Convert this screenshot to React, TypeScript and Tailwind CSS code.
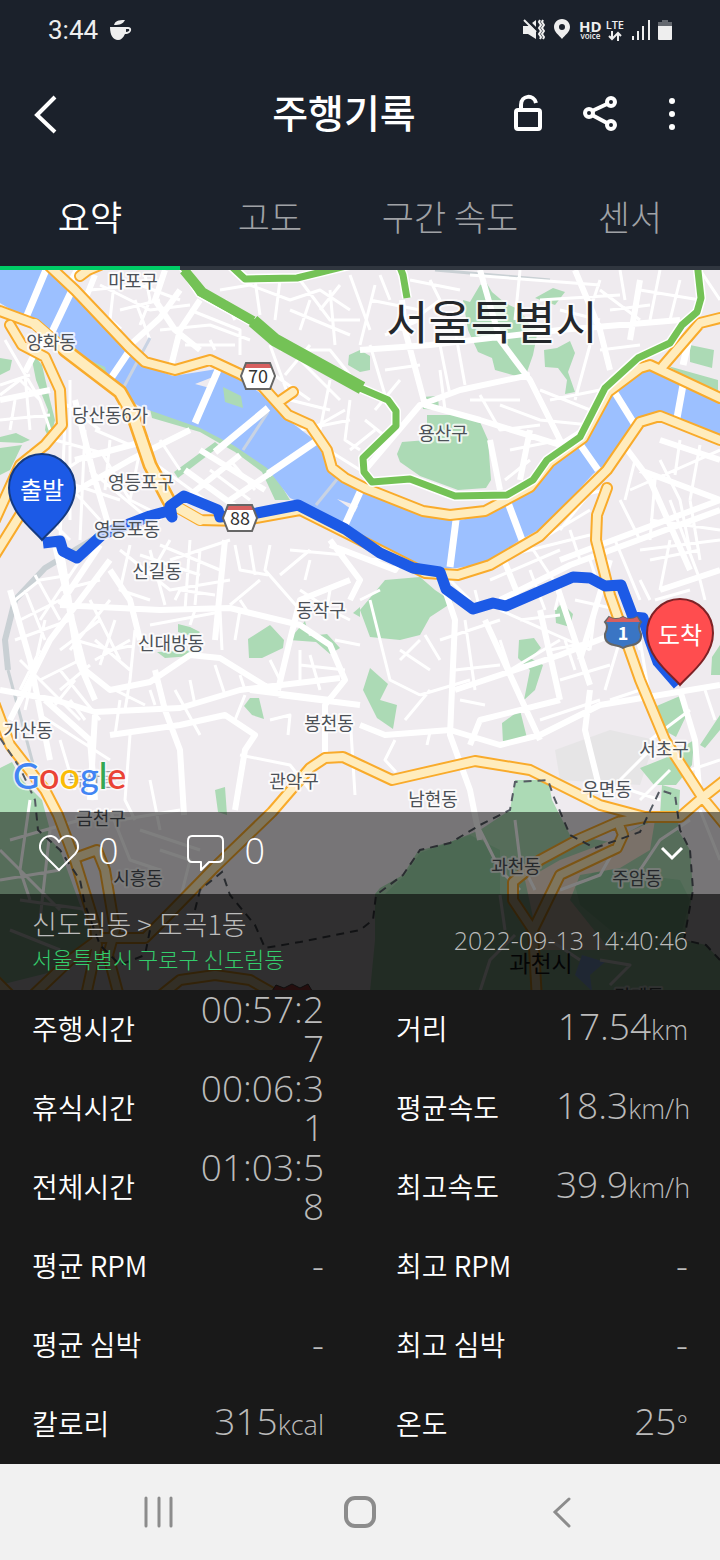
import { useState } from "react";

const KR = "font-['Noto_Sans_CJK_KR',sans-serif]";

const TABS = ["요약", "고도", "구간 속도", "센서"];

type Stat = { label: string; value: string; unit?: string; wrap?: boolean };

const STATS: Stat[] = [
  { label: "주행시간", value: "00:57:27", wrap: true },
  { label: "거리", value: "17.54", unit: "km" },
  { label: "휴식시간", value: "00:06:31", wrap: true },
  { label: "평균속도", value: "18.3", unit: "km/h" },
  { label: "전체시간", value: "01:03:58", wrap: true },
  { label: "최고속도", value: "39.9", unit: "km/h" },
  { label: "평균 RPM", value: "-" },
  { label: "최고 RPM", value: "-" },
  { label: "평균 심박", value: "-" },
  { label: "최고 심박", value: "-" },
  { label: "칼로리", value: "315", unit: "kcal" },
  { label: "온도", value: "25", unit: "°" },
];

const PLACES = [
  { name: "마포구", x: 133, y: 288 },
  { name: "양화동", x: 51, y: 349 },
  { name: "당산동6가", x: 110, y: 422 },
  { name: "영등포구", x: 141, y: 489 },
  { name: "영등포동", x: 127, y: 536 },
  { name: "신길동", x: 157, y: 578 },
  { name: "동작구", x: 321, y: 617 },
  { name: "신대방동", x: 171, y: 650 },
  { name: "봉천동", x: 329, y: 730 },
  { name: "가산동", x: 28, y: 737 },
  { name: "관악구", x: 294, y: 788 },
  { name: "남현동", x: 433, y: 806 },
  { name: "우면동", x: 607, y: 796 },
  { name: "서초구", x: 664, y: 756 },
  { name: "용산구", x: 443, y: 440 },
  { name: "금천구", x: 101, y: 825 },
  { name: "시흥동", x: 138, y: 885 },
  { name: "과천동", x: 516, y: 873 },
  { name: "주암동", x: 637, y: 885 },
  { name: "막계동", x: 639, y: 1003 },
];

const RIVER =
  "M0 260 L45 265 75 296 110 330 143 365 173 376 217 369 243 381 267 398 287 419 317 442 333 475 360 492 423 515 457 521 490 513 533 487 547 464 580 440 607 394 630 373 650 369 720 400 V442 L660 420 643 424 627 447 593 474 547 525 517 542 487 563 457 568 427 569 393 555 360 534 320 512 290 498 267 468 233 445 200 428 143 408 100 385 60 350 25 318 0 303Z";

const PARKS = [
  "M427 415 470 415 480 422 488 440 491 480 486 488 458 490 420 476 400 462 397 454 402 442 427 440Z",
  "M421 397 438 396 439 410 423 409Z",
  "M463 300 470 302 480 285 486 282 492 292 505 303 520 310 530 325 538 330 533 355 527 372 520 377 495 370 492 358 478 352 468 330Z",
  "M535 298 553 288 565 292 555 305Z",
  "M544 350 557 348 570 341 575 353 568 372 575 392 565 394 567 380 558 368 545 367Z",
  "M0 358 12 360 10 370 0 375Z M0 437 16 433 30 440 22 443 0 442Z M0 448 22 445 10 470 0 475Z",
  "M349 355 360 350 370 356 370 370 360 372 348 365Z",
  "M690 345 714 350 712 368 690 362Z M668 366 718 380 718 391 690 380Z",
  "M215 375 220 387 210 385Z",
  "M150 409 205 420 240 440 270 467 290 500 275 500 262 472 235 452 200 432 152 418Z",
  "M174 472 215 442 220 446 178 478Z",
  "M30 350 42 365 50 400 55 420 50 440 45 430 48 410 36 380Z",
  "M360 610 385 580 420 577 435 590 453 602 430 617 420 635 400 640 370 637Z",
  "M248 639 270 625 272 627 284 640 283 648 262 658 249 658Z M289 640 305 621 309 636 327 634 340 648 330 654 316 642Z",
  "M178 624 190 627 200 632 195 637 178 632Z M157 652 200 650 192 656 165 658Z",
  "M244 706 250 698 259 698 264 719 252 715Z M353 613 360 607 360 617Z",
  "M555 610 562 603 573 614 570 627 556 623Z M519 640 534 638 541 648 530 658 543 665 535 690 524 700 530 670 518 658Z",
  "M502 723 520 710 527 738 503 743Z M363 690 370 668 388 684 380 700 397 705 393 729 377 718Z",
  "M652 708 680 696 688 712 676 737 660 728Z M712 657 720 645 720 675 711 675Z M700 745 720 715 720 730 705 748Z",
  "M640 768 665 758 694 740 692 765 676 785 654 785Z",
  "M215 790 225 787 227 815 218 812Z M0 768 12 762 22 780 42 800 50 830 40 850 0 820Z",
  "M0 820 25 812 60 850 80 905 95 940 60 970 0 985Z",
  "M515 780 548 780 552 800 570 835 610 842 660 815 662 785 680 790 678 830 690 850 693 890 684 940 706 945 720 960 720 991 370 991 375 940 375 894 380 888 403 875 418 851 450 842 480 830 510 810Z",
];

const FOREST_DARK =
  "M420 853 470 835 500 850 500 894 385 894 405 875Z M575 885 600 868 640 875 680 880 690 900 680 940 610 930 580 905Z";

// main white streets
const STREETS = [
  "M77 270 60 300 52 320 25 372 M70 300 55 330 M165 270 155 300 175 330 200 350",
  "M95 275 85 300 120 330 M180 290 160 318 130 345 M200 300 180 330 170 370",
  "M60 545 72 620 85 670 110 690 150 682 190 655 220 658 280 695 360 705",
  "M0 690 55 700 95 712 180 708 240 690 340 678",
  "M155 670 165 710 180 750 184 815 M95 715 90 800 M110 735 180 725 225 715 255 735 245 750 235 810",
  "M225 540 215 640 M60 605 160 610 230 608 300 625 330 645 345 680 325 705 325 755",
  "M350 580 300 600 290 640 278 690 M445 590 455 620 450 735 470 790 480 840",
  "M360 725 385 735 450 730 500 745 540 735 600 705 720 685",
  "M455 690 560 655 650 620 M470 745 480 720 560 700 M485 620 540 740 M540 610 560 700",
  "M660 590 720 570 M500 600 570 565 720 510 M590 690 585 730 600 790",
  "M680 690 695 740 700 800 M610 560 580 660 M555 580 590 685 M500 550 520 600",
  "M402 300 405 330 425 405 480 420 560 445 600 420 M480 270 500 340 530 380 560 440 570 460",
  "M360 350 430 345 560 330 680 320 M575 270 600 330 610 370 M640 280 630 340",
  "M365 470 420 405 460 390 530 375 M490 440 500 490 M530 430 520 480",
  "M620 440 650 480 690 570 M640 470 720 500 M660 440 720 460 M560 560 720 500",
  "M0 400 50 390 M75 400 95 480 110 530 M75 460 150 440 M60 500 130 460 190 430",
  "M110 560 50 640 10 720 M10 590 30 660 50 760 M110 570 130 600 140 640",
  "M185 470 240 510 M200 450 265 490 M230 500 275 470 M190 495 240 455",
  "M330 540 360 580 350 600 M410 545 395 570 330 545",
  "M55 545 68 600 78 660 95 700 M250 690 330 700 M100 545 60 605 M45 700 90 740 95 800",
];

const LANES = [
  "M100 285 150 310 190 305 M115 275 110 320 M135 300 150 340 M190 310 240 330 240 355",
  "M220 290 250 285 290 300 320 290 350 310 M280 280 275 320 M300 280 330 320 360 320",
  "M310 300 300 330 M340 285 320 310 M370 300 420 310 M430 280 440 300 400 330 M380 275 390 300",
  "M270 345 290 400 330 410 M300 360 340 400 M330 380 320 430 M350 400 345 440 360 450",
  "M210 340 215 350 M185 345 235 345 M300 430 350 420 M320 445 360 470",
  "M375 410 400 380 M365 420 390 440 M440 370 445 410 M470 400 520 400 M540 390 590 410",
  "M500 405 540 420 590 425 M510 450 560 440 M530 460 505 480 M480 395 500 430 540 425",
  "M540 300 620 295 M600 280 590 310 M640 290 700 300 M660 270 650 320 M610 310 650 305 M700 270 720 300",
  "M470 275 600 285 M520 270 515 320 M560 310 600 320",
  "M5 340 40 400 M0 395 20 380 40 400 50 430 M20 470 50 480 80 460 M70 380 70 520 M85 430 80 540",
  "M90 470 150 520 M100 450 130 500 M60 480 120 500 M40 510 70 540 M110 440 105 490",
  "M160 440 180 470 M150 460 205 500 M170 480 160 520 M210 470 250 500 M230 460 255 490",
  "M120 550 170 590 230 580 M130 545 120 590 150 600 M150 550 165 605 M190 540 185 610 M235 545 240 570 268 575",
  "M170 560 230 540 M175 600 180 590 215 595 M150 625 220 612 M135 630 130 680 M220 610 222 650",
  "M20 620 60 600 M15 640 70 620 M60 650 100 620 M40 680 80 660 M20 660 50 690 80 720",
  "M60 670 100 720 M40 715 110 760 M80 560 40 620 M90 600 120 660 M95 640 130 670 M60 690 90 665",
  "M150 690 155 705 M175 690 200 735 M120 700 115 735 M130 735 125 800 135 820 M60 740 75 790",
  "M270 545 265 570 300 610 M290 550 345 555 M310 560 305 580 M330 590 325 620 M240 600 250 615 M260 580 230 605",
  "M300 650 300 680 M270 660 280 680 M310 655 320 690 M335 640 360 645 M240 755 290 765 310 790",
  "M350 715 355 795 M270 720 290 715 288 735 M245 695 235 720 M150 780 160 830",
  "M370 560 420 555 M380 590 360 600 M430 560 470 600 M370 600 390 680 420 695 M420 695 470 680",
  "M400 650 430 670 M405 720 430 690 M400 660 420 640 M425 635 440 660 M440 640 500 620",
  "M460 700 485 705 M455 670 500 665 M465 620 475 690 M500 640 510 670 560 640 M520 620 560 615",
  "M500 610 590 650 M540 720 600 700 M550 650 600 640 M560 680 610 665 M590 560 600 590 M530 570 545 610",
  "M630 490 720 450 M650 520 720 530 M640 550 720 540 M620 500 640 540 M660 460 680 500 690 550",
  "M540 540 590 510 M570 530 580 560 M540 560 560 590 M650 560 700 550 M640 580 650 600 M630 620 640 650",
  "M690 500 700 560 M640 640 650 700 M610 700 640 690 M560 590 555 610 M700 420 720 430",
  "M620 430 610 470 M600 480 560 530 M670 500 700 580 M705 690 715 720 M650 740 690 710 M620 780 650 750 M690 770 720 760",
  "M640 800 670 770 M630 790 660 800 M395 740 385 760 396 772 M430 732 427 745",
  "M10 840 80 820 M30 800 20 870 30 900 M0 880 60 870 M50 830 40 920 M20 900 90 910 M0 850 60 910 M10 930 60 950",
  "M110 810 130 860 160 870 M140 830 200 850 M120 820 180 810 M160 850 190 860 180 900",
  "M480 830 500 870 520 890 M515 820 520 860 535 890 M500 895 505 930 M480 991 490 960 515 935",
  "M640 870 660 840 690 820 M560 890 600 875 620 840 M700 810 720 860 M550 940 580 960 M600 960 630 965 610 985",
  "M90 290 140 285 180 300 M145 275 150 300 140 325 M160 330 210 325 250 340 M120 310 160 300",
  "M225 300 235 320 M255 280 260 315 M290 310 350 335 M330 290 335 345 M350 275 370 330 M375 285 360 345",
  "M280 350 330 350 350 375 M310 345 285 375 M260 365 310 400 M345 410 310 430 M375 430 350 450",
  "M410 280 460 290 M420 320 385 335 M370 345 385 395 M440 345 450 395 M455 330 465 385 M385 370 420 365",
  "M590 345 575 400 M600 350 640 345 M550 400 600 390 M600 290 640 320 M620 270 625 300 M680 280 670 320",
  "M60 400 100 430 M55 440 110 455 M50 465 100 520 M65 420 60 540 M95 430 130 445 M140 450 130 500 150 510",
  "M15 400 10 430 M0 420 50 415 M25 375 30 430 M0 385 30 375 M30 450 5 500 M70 500 50 530",
  "M15 600 40 580 70 575 M25 590 45 640 M35 575 60 620 M110 600 70 650 M100 580 60 590 M75 640 110 650 135 645",
  "M95 660 130 640 M115 620 100 665 M20 690 40 650 M45 620 25 710 M55 705 75 680 M70 700 85 720",
  "M140 555 200 575 M160 545 220 570 M200 550 195 605 M170 540 150 575 M240 610 235 640 M195 610 190 625",
  "M115 690 145 705 M130 680 125 710 M190 680 195 705 M215 665 225 695 M240 675 245 690",
  "M250 545 255 575 M280 575 310 550 M300 590 330 610 350 620 M300 665 345 670",
  "M620 640 605 690 M575 600 620 610 M565 640 575 670 M595 610 590 650 M655 600 690 590 M700 580 705 600",
  "M635 460 625 500 M680 440 675 475 M700 445 690 500 M655 480 650 540 M615 540 640 600 M670 540 660 590",
  "M490 580 560 550 M475 590 480 610 M510 555 590 535 M530 545 550 575 M605 490 560 500",
];

const BRIDGES =
  "M48 265 25 320 M72 290 52 332 M128 353 105 387 M218 370 195 423 M268 408 215 452 M315 442 268 474 M360 492 345 525 M456 520 450 567 M507 500 522 540 M577 440 598 470 M612 388 635 425 M683 385 677 418 M690 335 683 365";

const HIGHWAYS = [
  "M45 262 75 290 130 348 145 362 175 370 210 360 240 374 262 386 288 415 310 425 327 450 332 468 345 478 365 488 423 511 450 515 485 511 530 487 550 462 583 438 608 392 640 368 650 365 720 398",
  "M0 311 35 324 65 350 120 392 133 415 150 465 170 503 200 520 240 521 300 510 360 540 425 573 458 575 490 565 540 536 607 470 640 422 660 416 720 440",
  "M663 366 700 323 720 318",
  "M607 488 597 515 596 540 610 595 640 680 665 740 702 797 725 825",
  "M10 325 22 345 45 357 60 390 62 425 45 445 20 465 -5 520",
  "M-5 555 20 515",
  "M272 812 310 768 325 758 343 757 360 765 392 780 475 761 530 770 600 805 645 817 680 817 702 798 725 780",
  "M272 812 215 867 165 918 145 938 100 938 70 960 28 1000",
  "M-5 705 10 745 45 790 58 815 75 860 95 925 97 945 85 1000",
  "M120 1000 108 955 115 930 105 870 97 850 75 858",
  "M155 1000 180 980 215 975 250 980 285 1000 M-5 980 15 1000",
  "M645 817 618 822 577 840 540 860 513 882 513 900 533 930",
  "M618 822 623 835 617 848 560 875 533 930 537 1000",
  "M80 276 88 270 100 265 M280 401 293 392",
];

const BORDERS =
  "M0 738 20 768 35 800 38 830 60 850 80 880 85 905 100 945 120 965 145 955 150 930 M195 910 200 890 222 872 230 895 255 925 265 948 300 942 360 930 373 920 376 895 403 875 420 850 450 843 480 825 510 810 515 782 548 780 553 795 570 835 595 848 640 832 660 790 675 795 680 830 690 850 693 890 684 940 706 945 720 960";

const GREEN_LINE =
  "M180 262 200 293 253 322 273 340 360 388 388 400 396 411 396 426 363 458 364 472 372 482 410 479 455 496 507 495 533 480 547 460 580 437 605 388 638 358 670 343 682 325 697 312 701 298 697 262 M230 265 245 279 297 278 350 265 M398 262 403 275 407 298";

const ROUTE =
  "M43 543 60 541 63 551 77 558 103 534 150 516 168 511 172 517 170 506 184 496 218 510 220 517 257 513 298 505 345 529 380 553 413 568 440 572 446 589 473 609 493 603 506 606 573 577 590 578 605 586 621 585 633 617 643 618 650 640 658 662 678 685";

function RoadShield({ x, y, label }: { x: number; y: number; label: string }) {
  return (
    <g transform={`translate(${x} ${y})`}>
      <path d="M-12 -13H12L17 0 12 13H-12L-17 0Z" fill="#fff" />
      <path d="M-12 -13H12L14 -8H-14Z" fill="#d75f5f" />
      <path d="M-12 -13H12L17 0 12 13H-12L-17 0Z" fill="none" stroke="#666" strokeWidth="2" />
      <text y="7" textAnchor="middle" className={`${KR} text-[18px]`} fill="#333">
        {label}
      </text>
    </g>
  );
}

function Pin({ x, y, label, fill, stroke }: { x: number; y: number; label: string; fill: string; stroke: string }) {
  return (
    <g transform={`translate(${x} ${y})`}>
      <path
        d="M0 0C-7 -9 -33 -27 -33 -52A33 34 0 0 1 33 -52C33 -27 7 -9 0 0Z"
        fill={fill}
        stroke={stroke}
        strokeWidth="2"
      />
      <text y="-41" textAnchor="middle" className={`${KR} text-[24px]`} fill="#fff">
        {label}
      </text>
    </g>
  );
}

function RouteMap() {
  return (
    <svg
      viewBox="0 270 720 720"
      preserveAspectRatio="xMidYMin slice"
      className="absolute inset-0 h-full w-full"
      role="img"
      aria-label="주행 경로 지도"
    >
      <rect x="0" y="260" width="720" height="740" fill="#efebef" />
      <path d="M555 750 610 730 655 740 640 785 560 780Z" fill="#e6e5e6" />
      <path d={PARKS.join(" ")} fill="#acdab5" />
      <path d={FOREST_DARK} fill="#98d2a6" />
      <path d="M560 860 600 845 655 820 650 850 620 868 580 875 570 900 610 950 540 950 525 880Z" fill="#f4e3d2" />
      <path d="M582 955 605 962 590 975 592 991 575 975Z" fill="#9cc0ff" />

      <g fill="none" stroke="#c9d0d4" strokeWidth="3">
        <path d="M100 535 45 568 15 600 5 640 8 670" strokeWidth="6" />
        <path d="M8 670 40 790 M712 400 708 430 M435 270 550 280" />
      </g>

      <g fill="none" stroke="#fff" strokeLinejoin="round">
        <path d={LANES.join(" ")} strokeWidth="3" />
        <path d={STREETS.join(" ")} strokeWidth="6" />
      </g>

      <path d={RIVER} fill="#9cc0ff" />
      <path d="M82 357 105 367 107 374 85 364Z M223 387 241 396 243 408 225 402Z" fill="#acdab5" />
      <path d="M195 384 213 377 210 388Z M337 499 358 506 355 512Z" fill="#efebef" />
      <path d="M150 338 120 394 M268 412 243 450 M338 478 316 505" fill="none" stroke="#c9d3e3" strokeWidth="3" />
      <path d={BRIDGES} fill="none" stroke="#fff" strokeWidth="7" />

      <g fill="none" strokeLinejoin="round" strokeLinecap="round">
        <path d={HIGHWAYS.join(" ")} stroke="#f9ab2b" strokeWidth="12" />
        <path d={HIGHWAYS.join(" ")} stroke="#ffecbd" strokeWidth="8" />
        <path d="M65 350 120 392 133 415 150 465 170 503" stroke="#f9ab2b" strokeWidth="15" />
        <path d="M35 324 65 350 120 392 133 415 150 465 170 503 200 520" stroke="#ffecbd" strokeWidth="10" />
      </g>

      <path d={BORDERS} fill="none" stroke="#555b63" strokeWidth="2" strokeDasharray="8 6" />

      <g fill="none" strokeLinejoin="round">
        <path d={GREEN_LINE} stroke="#fff" strokeWidth="10" />
        <path d={GREEN_LINE} stroke="#74c256" strokeWidth="7" />
        <path d="M184 270 202 292 253 321" stroke="#74c256" strokeWidth="10" />
        <path d="M253 321 275 340 362 388" stroke="#74c256" strokeWidth="13" />
        <path d={ROUTE} stroke="#1c5ae6" strokeWidth="11" />
      </g>

      <RoadShield x={258} y={376} label="70" />
      <RoadShield x={240} y={518} label="88" />

      <g stroke="#666" strokeWidth="2">
        <path d="M609 617Q616 621 623 617Q630 621 637 617L641 622Q637 626 641 634Q642 643 632 645Q626 646 623 648Q620 646 614 645Q604 643 605 634Q609 626 605 622Z" fill="#3a75c4" />
        <path d="M609 617Q616 621 623 617Q630 621 637 617L640 622H606Z" fill="#d75f5f" stroke="none" />
      </g>
      <text x="623" y="640" textAnchor="middle" className={`${KR} text-[18px] font-bold`} fill="#fff">
        1
      </text>
      <path d="M270 994 276 985 284 988 292 984 300 988 308 984 314 994Z" fill="#b94848" stroke="#444" />

      <g
        textAnchor="middle"
        fill="#4c5157"
        stroke="#fff"
        strokeOpacity="0.8"
        strokeWidth="4"
        strokeLinejoin="round"
        style={{ paintOrder: "stroke" }}
        className={`${KR} text-[18px]`}
      >
        {PLACES.map((p) => (
          <text key={p.name} x={p.x} y={p.y}>
            {p.name}
          </text>
        ))}
        <text x="92" y="786" opacity="0.5">
          독산동
        </text>
        <text x="492" y="339" fill="#24272b" className="text-[46px]">
          서울특별시
        </text>
        <text x="541" y="972" fill="#16181b" strokeOpacity="0" className="text-[23px]">
          과천시
        </text>
      </g>

      <Pin x={42} y={540} label="출발" fill="#1c5ae6" stroke="#153a80" />
      <Pin x={680} y={685} label="도착" fill="#ff4d4f" stroke="#7d2226" />

      <text
        x="13"
        y="789"
        stroke="#fff"
        strokeOpacity="0.7"
        strokeWidth="3"
        style={{ paintOrder: "stroke" }}
        className="font-[Lato,sans-serif] text-[36px] font-medium"
      >
        <tspan fill="#4285f4">G</tspan>
        <tspan fill="#ea4335">o</tspan>
        <tspan fill="#fbbc05">o</tspan>
        <tspan fill="#4285f4">g</tspan>
        <tspan fill="#34a853">l</tspan>
        <tspan fill="#ea4335">e</tspan>
      </text>
    </svg>
  );
}

function StatusBar() {
  return (
    <div className="flex h-15 items-center justify-between px-12 text-[#eee]">
      <div className="flex items-center gap-3">
        <span className="font-[Roboto,sans-serif] text-[26px] leading-8">3:44</span>
        <svg width="22" height="22" viewBox="0 0 22 22" fill="currentColor">
          <path
            fillRule="evenodd"
            d="M0 8H18C23 8 22 15 15 15C13 19 11 21 8 21C3 21 0 16 0 8ZM16 10V13C20 13 20 10 18 10Z"
          />
          <path d="M4 6C5 2 8 1 15 1C13 5 10 6 4 6Z" />
        </svg>
      </div>
      <div className="flex items-center gap-2">
        <svg width="22" height="22" viewBox="0 0 22 22" fill="none" stroke="currentColor">
          <path d="M0 7H5L13 1V20L5 15H0Z" fill="currentColor" stroke="none" />
          <path d="M3 0 15 12" stroke="#1b212b" strokeWidth="3" />
          <path d="M1 1 13 13" strokeWidth="2" />
          <path d="M17 1 16 3 18 6 16 9 18 12 16 15 18 18 17 20M20 1 19 3 21 6 19 9 21 12 19 15 21 18 20 20" strokeWidth="2" />
        </svg>
        <svg width="18" height="22" viewBox="0 0 18 22" fill="currentColor" fillRule="evenodd">
          <path d="M9 0C4 0 1 4 1 8C1 13 6 16 9 20C12 16 17 13 17 8C17 4 14 0 9 0ZM9 5A3 3 0 1 1 9 11A3 3 0 0 1 9 5Z" />
        </svg>
        <div className="flex flex-col items-center font-['Open_Sans',sans-serif]">
          <span className="text-[15px] leading-3 font-bold">HD</span>
          <span className="text-[8px] leading-2 font-semibold">voice</span>
        </div>
        <div className="-ml-1 flex flex-col items-center">
          <span className="font-['Open_Sans',sans-serif] text-[11px] leading-3 font-semibold">LTE</span>
          <svg width="16" height="10" viewBox="0 0 16 10" fill="none" stroke="currentColor" strokeWidth="2">
            <path d="M5 0V8M2 5 5 8 8 5M11 10V2M8 5 11 2 14 5" />
          </svg>
        </div>
        <svg width="18" height="20" viewBox="0 0 18 20" stroke="currentColor" strokeWidth="2">
          <path d="M1 16V20M6 11V20M11 6V20M17 0V20" />
        </svg>
        <svg width="14" height="22" viewBox="0 0 14 22" fill="currentColor">
          <path d="M4 1H10V3H14V7H0V3H4Z" opacity="0.35" />
          <path d="M0 7H14V20Q14 21 13 21H1Q0 21 0 20Z" />
        </svg>
      </div>
    </div>
  );
}

function Header() {
  return (
    <div className="grid h-[106px] grid-cols-[1fr_auto_1fr] items-center px-6 text-white">
      <button aria-label="뒤로" className="flex h-12 w-12 items-center">
        <svg width="44" height="44" viewBox="0 0 44 44" fill="none" stroke="currentColor" strokeWidth="4">
          <path d="M31 6 13 24 31 41" />
        </svg>
      </button>
      <h1 className="mr-8 pb-1 text-[39px] leading-12 font-medium">주행기록</h1>
      <div className="flex items-center justify-end gap-6">
        <button aria-label="공개 설정" className="flex size-12 items-center justify-center">
          <svg width="40" height="40" viewBox="0 0 40 40" fill="none" stroke="currentColor" strokeWidth="4">
            <rect x="8" y="17" width="24" height="19" rx="2" />
            <path d="M13 17V12C13 2 26 1 28 10" />
          </svg>
        </button>
        <button aria-label="공유" className="flex size-12 items-center justify-center">
          <svg width="40" height="40" viewBox="0 0 40 40" fill="none" stroke="currentColor" strokeWidth="4">
            <circle cx="9" cy="20" r="4" />
            <circle cx="31" cy="9" r="4" />
            <circle cx="31" cy="32" r="4" />
            <path d="M12 18 27 11M12 22 27 30" />
          </svg>
        </button>
        <button aria-label="더보기" className="flex size-12 items-center justify-center">
          <svg width="8" height="40" viewBox="0 0 8 40" fill="currentColor">
            <circle cx="4" cy="8" r="3" />
            <circle cx="4" cy="21" r="3" />
            <circle cx="4" cy="34" r="3" />
          </svg>
        </button>
      </div>
    </div>
  );
}

function StatRow({ stat }: { stat: Stat }) {
  return (
    <div className="flex h-[79px] items-center justify-between pb-1">
      <dt className="w-40 shrink-0 text-[28px] leading-9 font-[350] whitespace-nowrap text-white">{stat.label}</dt>
      <dd
        className={`flex-1 text-right font-['Open_Sans',sans-serif] text-[37px] leading-[39px] font-light text-[#bbb] ${
          stat.wrap ? "break-all" : "whitespace-nowrap"
        }`}
      >
        {stat.value}
        {stat.unit && <span className="text-[27px]">{stat.unit}</span>}
      </dd>
    </div>
  );
}

export default function App() {
  const [activeTab, setActiveTab] = useState(0);

  return (
    <main className={`${KR} min-h-screen w-full bg-[#191919]`}>
      <header className="bg-[#1b212b]">
        <StatusBar />
        <Header />
        <nav className="grid grid-cols-4">
          {TABS.map((tab, i) => (
            <button
              key={tab}
              onClick={() => setActiveTab(i)}
              className={`flex h-[104px] items-center justify-center border-b-4 text-[35px] ${
                i === activeTab
                  ? "border-[#00cc66] font-[350] text-white"
                  : "border-[#30363f] font-light text-[#a0a2a6]"
              }`}
            >
              {tab}
            </button>
          ))}
        </nav>
      </header>

      <section className="relative overflow-hidden">
        <RouteMap />
        <div className="h-[542px]" />
        <div className="relative flex h-[82px] items-center justify-between bg-black/50 pr-8 pl-9 text-white">
          <div className="flex items-center gap-16">
            <button aria-label="좋아요" className="flex items-center gap-4">
              <svg width="46" height="40" viewBox="0 0 46 40" fill="none" stroke="currentColor" strokeWidth="2">
                <path d="M23 37 7 21C-3 10 14 -6 23 9C32 -6 49 10 39 21Z" strokeLinejoin="round" />
              </svg>
              <span className="pb-1 font-['Open_Sans',sans-serif] text-[36px] leading-10 font-light">0</span>
            </button>
            <button aria-label="댓글" className="flex items-center gap-4">
              <svg width="46" height="40" viewBox="0 0 46 40" fill="none" stroke="currentColor" strokeWidth="2">
                <path d="M9 3H35Q40 3 40 8V24Q40 29 35 29H26L18 37V29H9Q5 29 5 24V8Q5 3 9 3Z" strokeLinejoin="round" />
              </svg>
              <span className="pb-1 font-['Open_Sans',sans-serif] text-[36px] leading-10 font-light">0</span>
            </button>
          </div>
          <button aria-label="접기" className="flex size-8 items-center justify-center">
            <svg width="24" height="16" viewBox="0 0 24 16" fill="none" stroke="currentColor" strokeWidth="3">
              <path d="M2 3 12 13 22 3" />
            </svg>
          </button>
        </div>
        <div className="relative flex h-24 items-center justify-between bg-black/80 px-8 pb-1">
          <div className="flex flex-col">
            <span className="text-[27px] leading-9 font-light text-[#bbb]">신도림동 &gt; 도곡1동</span>
            <span className="text-[22px] leading-8 font-light text-[#34cc6c]">서울특별시 구로구 신도림동</span>
          </div>
          <time className="font-['Open_Sans',sans-serif] text-[25px] leading-8 font-light text-[#bbb]">
            2022-09-13 14:40:46
          </time>
        </div>
      </section>

      <dl className="grid grid-cols-2 gap-x-18 px-8">
        {STATS.map((stat) => (
          <StatRow key={stat.label} stat={stat} />
        ))}
      </dl>

      <nav className="flex h-24 items-center justify-between bg-[#f1f1f1] px-[141px] text-[#8c8c8c]">
        <button aria-label="최근 앱">
          <svg width="36" height="36" viewBox="0 0 36 36" stroke="currentColor" strokeWidth="3" strokeLinecap="round">
            <path d="M5 4V32M18 4V32M30 4V32" />
          </svg>
        </button>
        <button aria-label="홈">
          <svg width="36" height="36" viewBox="0 0 36 36" fill="none" stroke="currentColor" strokeWidth="4">
            <rect x="4" y="4" width="28" height="28" rx="9" />
          </svg>
        </button>
        <button aria-label="이전">
          <svg width="36" height="36" viewBox="0 0 36 36" fill="none" stroke="currentColor" strokeWidth="3" strokeLinecap="round">
            <path d="M26 5 12 18 26 32" />
          </svg>
        </button>
      </nav>
    </main>
  );
}
